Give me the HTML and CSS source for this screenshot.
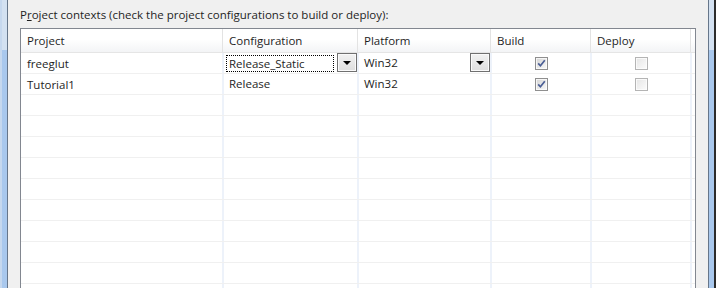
FILE: index.html
```html
<!DOCTYPE html>
<html>
  <head>
    <title>Project contexts</title>
    <link rel="stylesheet" href="styles.css">
  </head>
  <body>
  <div id="frame">
    <div class="edge left"></div>
    <div id="dialog">
      <div class="label">P<u>r</u>oject contexts (check the project configurations to build or deploy):</div>
      <div class="list">
        <div class="row head">
          <div class="cell first">Project</div>
          <div class="cell">Configuration</div>
          <div class="cell">Platform</div>
          <div class="cell">Build</div>
          <div class="cell">Deploy</div>
          <div class="cell last"></div>
        </div>
        <div class="row">
          <div class="cell first">freeglut</div>
          <div class="cell combo">
            <span class="focus">Release_Static</span>
            <span class="drop"><span class="arrow"></span></span>
          </div>
          <div class="cell combo">
            <span class="plain">Win32</span>
            <span class="drop"><span class="arrow"></span></span>
          </div>
          <div class="cell center">
            <svg class="check" width="13" height="13" viewBox="0 0 13 13">
              <rect x="0.5" y="0.5" width="12" height="12" fill="#f4f4f4" stroke="#8f8f8f"/>
              <rect x="1.5" y="1.5" width="10" height="10" fill="url(#gOn)" stroke="#ffffff" stroke-opacity="0.6"/>
              <path d="M3.2 6.4 L5.4 8.8 L9.8 3.2" fill="none" stroke="#4a5e95" stroke-width="1.7"/>
            </svg>
          </div>
          <div class="cell center">
            <svg class="check" width="13" height="13" viewBox="0 0 13 13">
              <rect x="0.5" y="0.5" width="12" height="12" fill="#f7f7f7" stroke="#b4b4b4"/>
              <rect x="1.5" y="1.5" width="10" height="10" fill="url(#gOff)" stroke="#ffffff" stroke-opacity="0.6"/>
            </svg>
          </div>
          <div class="cell last"></div>
        </div>
        <div class="row">
          <div class="cell first">Tutorial1</div>
          <div class="cell"><span class="plain">Release</span></div>
          <div class="cell"><span class="plain">Win32</span></div>
          <div class="cell center">
            <svg class="check" width="13" height="13" viewBox="0 0 13 13">
              <rect x="0.5" y="0.5" width="12" height="12" fill="#f4f4f4" stroke="#8f8f8f"/>
              <rect x="1.5" y="1.5" width="10" height="10" fill="url(#gOn)" stroke="#ffffff" stroke-opacity="0.6"/>
              <path d="M3.2 6.4 L5.4 8.8 L9.8 3.2" fill="none" stroke="#4a5e95" stroke-width="1.7"/>
            </svg>
          </div>
          <div class="cell center">
            <svg class="check" width="13" height="13" viewBox="0 0 13 13">
              <rect x="0.5" y="0.5" width="12" height="12" fill="#f7f7f7" stroke="#b4b4b4"/>
              <rect x="1.5" y="1.5" width="10" height="10" fill="url(#gOff)" stroke="#ffffff" stroke-opacity="0.6"/>
            </svg>
          </div>
          <div class="cell last"></div>
        </div>
        <div class="row"><div class="cell first"></div><div class="cell"></div><div class="cell"></div><div class="cell"></div><div class="cell"></div><div class="cell last"></div></div>
        <div class="row"><div class="cell first"></div><div class="cell"></div><div class="cell"></div><div class="cell"></div><div class="cell"></div><div class="cell last"></div></div>
        <div class="row"><div class="cell first"></div><div class="cell"></div><div class="cell"></div><div class="cell"></div><div class="cell"></div><div class="cell last"></div></div>
        <div class="row"><div class="cell first"></div><div class="cell"></div><div class="cell"></div><div class="cell"></div><div class="cell"></div><div class="cell last"></div></div>
        <div class="row"><div class="cell first"></div><div class="cell"></div><div class="cell"></div><div class="cell"></div><div class="cell"></div><div class="cell last"></div></div>
        <div class="row"><div class="cell first"></div><div class="cell"></div><div class="cell"></div><div class="cell"></div><div class="cell"></div><div class="cell last"></div></div>
        <div class="row"><div class="cell first"></div><div class="cell"></div><div class="cell"></div><div class="cell"></div><div class="cell"></div><div class="cell last"></div></div>
        <div class="row"><div class="cell first"></div><div class="cell"></div><div class="cell"></div><div class="cell"></div><div class="cell"></div><div class="cell last"></div></div>
        <div class="row"><div class="cell first"></div><div class="cell"></div><div class="cell"></div><div class="cell"></div><div class="cell"></div><div class="cell last"></div></div>
        <div class="row"><div class="cell first"></div><div class="cell"></div><div class="cell"></div><div class="cell"></div><div class="cell"></div><div class="cell last"></div></div>
      </div>
    </div>
    <div class="edge right"></div>
  </div>
  <svg width="0" height="0" class="defs">
    <defs>
      <linearGradient id="gOn" x1="0" y1="0" x2="1" y2="1">
        <stop offset="0" stop-color="#d6d6d6"/>
        <stop offset="1" stop-color="#f8f8f8"/>
      </linearGradient>
      <linearGradient id="gOff" x1="0" y1="0" x2="1" y2="1">
        <stop offset="0" stop-color="#e6e6e6"/>
        <stop offset="1" stop-color="#fbfbfb"/>
      </linearGradient>
    </defs>
  </svg>
  </body>
</html>
```

FILE: styles.css
```css
body {
  margin: 0;
  height: 288px;
  overflow: hidden;
  background: #f0f0f0;
  color: #1e1e1e;
  font: 11.5px "Open Sans", "Noto Sans", sans-serif;
  }
#frame {
  display: flex;
  height: 288px;
  }
.edge {
  width: 5px;
  background: linear-gradient(to bottom, #d3e1f1 0, #d3e1f1 50px, #a9c8ed 50px);
  }
.edge.left {
  border-left: 2px solid #c6d8ee;
  border-right: 1px solid #66768a;
  }
.edge.right {
  border-left: 1px solid #66768a;
  border-right: 2px solid #2c2c2c;
  }
#dialog {
  flex: 1;
  padding: 7px 12px 0 12px;
  overflow: hidden;
  }
.label {
  line-height: 16px;
  margin-bottom: 5px;
  }
.list {
  background: white;
  border: 1px solid #828790;
  border-bottom: none;
  }
.row {
  display: grid;
  grid-template-columns: 203px 135px 133px 100px 100px 3px;
  height: 20px;
  border-bottom: 1px solid #f0f0f0;
  }
.row.head {
  height: 23px;
  background: linear-gradient(to bottom, #ffffff 0, #ffffff 45%, #f3f4f6 100%);
  border-bottom: 1px solid #e5e5e5;
  }
.cell {
  display: flex;
  align-items: center;
  padding-left: 5px;
  border-right: 2px solid #edf2fa;
  white-space: nowrap;
  overflow: hidden;
  }
.head .cell {
  border-right: 1px solid #e3e3e3;
  margin-right: 1px;
  }
.cell.first {
  padding-left: 6px;
  }
.cell.last {
  padding: 0;
  border-right: none;
  }
.cell.center {
  justify-content: center;
  padding-left: 0;
  }
.cell.combo {
  padding-left: 0;
  align-items: flex-start;
  }
.focus {
  box-sizing: border-box;
  width: 108px;
  height: 17px;
  margin: 2px 0 0 2px;
  padding-left: 2px;
  border: 1px dotted #000;
  line-height: 15px;
  }
.plain {
  flex: 1;
  line-height: 20px;
  }
.combo .plain {
  padding-left: 5px;
  }
.drop {
  box-sizing: border-box;
  width: 20px;
  height: 19px;
  margin-left: auto;
  border: 1px solid #707070;
  box-shadow: inset 0 0 0 1px #fafafa;
  background: linear-gradient(to bottom, #f2f2f2, #dedede);
  display: flex;
  align-items: center;
  justify-content: center;
  }
.arrow {
  width: 0;
  height: 0;
  border-left: 4px solid transparent;
  border-right: 4px solid transparent;
  border-top: 4px solid #000;
  }
.check {
  display: block;
  }
.defs {
  position: absolute;
  }
```
